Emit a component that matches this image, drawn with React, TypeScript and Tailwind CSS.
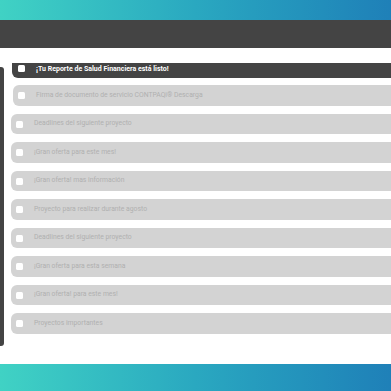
import React from "react";

const rows = [
  "Firma de documento de servicio CONTPAQi® Descarga",
  "Deadlines del siguiente proyecto",
  "¡Gran oferta para este mes!",
  "¡Gran oferta! mas información",
  "Proyecto para realizar durante agosto",
  "Deadlines del siguiente proyecto",
  "¡Gran oferta para esta semana",
  "¡Gran oferta! para este mes!",
  "Proyectos importantes",
];

export default function App() {
  return (
    <div
      className="w-[391px] h-[391px] overflow-hidden bg-white flex flex-col"
      style={{ fontFamily: "Roboto, 'Liberation Sans', sans-serif" }}
    >
      <div className="h-[20px] shrink-0 bg-gradient-to-r from-[#40d2c4] via-[#2aa8c0] to-[#1f80b8]" />
      <div className="h-[28px] shrink-0 bg-[#444444]" />
      <div className="flex-1 flex pt-[15px] overflow-hidden">
        <div className="w-[4px] shrink-0 mt-[4px] h-[279px] bg-[#444444] rounded-r-[3px]" />
        <div className="flex flex-col gap-[8px] ml-[6px] w-[420px] shrink-0">
          <div className="ml-[2px] h-[15px] -mb-[1px] bg-[#444444] rounded-b-[6px] flex items-center pl-[6px]">
            <div className="w-[7px] h-[7px] bg-white rounded-[1.5px] -mt-[5px]" />
            <span className="ml-[11px] -mt-[3px] text-[7px] font-bold text-white leading-none">
              ¡Tu Reporte de Salud Financiera está listo!
            </span>
          </div>
          {rows.map((t, i) => (
            <div
              key={i}
              className={`${i === 0 ? "ml-[3px]" : "ml-[1px]"} h-[20.5px] bg-[#d3d3d3] rounded-[6px] flex items-center pl-[5px]`}
            >
              <div className="w-[7px] h-[7px] bg-white rounded-[1.5px] mt-[1px]" />
              <span className="ml-[11px] text-[6.8px] text-[#b0b0b0] leading-none">{t}</span>
            </div>
          ))}
        </div>
      </div>
      <div className="h-[27px] shrink-0 bg-gradient-to-r from-[#40d2c4] via-[#2aa8c0] to-[#1f80b8]" />
    </div>
  );
}
